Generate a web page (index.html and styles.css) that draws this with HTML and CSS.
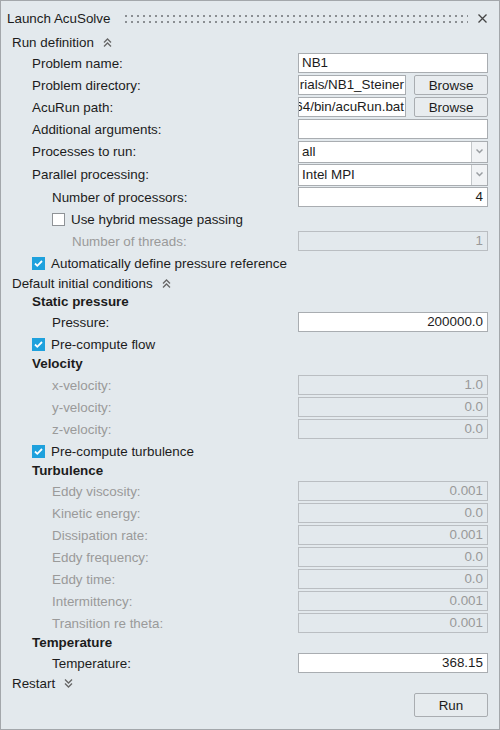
FILE: index.html
```html
<!DOCTYPE html>
<html lang="en">
<head>
    <meta charset="UTF-8">
    <meta name="viewport" content="width=device-width, initial-scale=1.0">
    <title>Launch AcuSolve</title>
    <link rel="stylesheet" href="styles.css">
</head>
<body>
<div class="panel">
    <div class="titlebar">
        <span class="title">Launch AcuSolve</span>
        <span class="grip"></span>
        <svg class="close" width="9" height="9" viewBox="0 0 9 9"><path d="M0.5 0.5 L8.5 8.5 M8.5 0.5 L0.5 8.5" stroke="#444" stroke-width="1.3" fill="none"/></svg>
    </div>

    <div class="section">
        <span>Run definition</span>
        <svg class="chev" width="9" height="9" viewBox="0 0 9 9"><path d="M1 4.5 L4.5 1 L8 4.5 M1 8.5 L4.5 5 L8 8.5" stroke="#666" stroke-width="1.3" fill="none"/></svg>
    </div>
    <div class="row l1"><span class="label">Problem name:</span><div class="field box">NB1</div></div>
    <div class="row l1"><span class="label">Problem directory:</span>
        <div class="field pair"><div class="box clip">rials/NB1_Steiner</div><span class="button">Browse</span></div></div>
    <div class="row l1"><span class="label">AcuRun path:</span>
        <div class="field pair"><div class="box clip">64/bin/acuRun.bat</div><span class="button">Browse</span></div></div>
    <div class="row l1"><span class="label">Additional arguments:</span><div class="field box"></div></div>
    <div class="row tall l1"><span class="label">Processes to run:</span>
        <div class="field select"><span class="value">all</span><span class="arrow"><svg width="7" height="5" viewBox="0 0 7 5"><path d="M0.5 0.5 L3.5 3.5 L6.5 0.5" stroke="#9a9ea2" stroke-width="1.5" fill="none"/></svg></span></div></div>
    <div class="row tall l1"><span class="label">Parallel processing:</span>
        <div class="field select"><span class="value">Intel MPI</span><span class="arrow"><svg width="7" height="5" viewBox="0 0 7 5"><path d="M0.5 0.5 L3.5 3.5 L6.5 0.5" stroke="#9a9ea2" stroke-width="1.5" fill="none"/></svg></span></div></div>
    <div class="row l2"><span class="label">Number of processors:</span><div class="field box num">4</div></div>
    <div class="row l2"><span class="check"></span><span class="label">Use hybrid message passing</span></div>
    <div class="row l3 off"><span class="label">Number of threads:</span><div class="field box num">1</div></div>
    <div class="row l1"><span class="check on"></span><span class="label">Automatically define pressure reference</span></div>

    <div class="section initial">
        <span>Default initial conditions</span>
        <svg class="chev" width="9" height="9" viewBox="0 0 9 9"><path d="M1 4.5 L4.5 1 L8 4.5 M1 8.5 L4.5 5 L8 8.5" stroke="#666" stroke-width="1.3" fill="none"/></svg>
    </div>
    <div class="heading">Static pressure</div>
    <div class="row l2"><span class="label">Pressure:</span><div class="field box num">200000.0</div></div>
    <div class="row l1"><span class="check on"></span><span class="label">Pre-compute flow</span></div>
    <div class="heading wide">Velocity</div>
    <div class="row l2 off"><span class="label">x-velocity:</span><div class="field box num">1.0</div></div>
    <div class="row l2 off"><span class="label">y-velocity:</span><div class="field box num">0.0</div></div>
    <div class="row l2 off"><span class="label">z-velocity:</span><div class="field box num">0.0</div></div>
    <div class="row l1"><span class="check on"></span><span class="label">Pre-compute turbulence</span></div>
    <div class="heading">Turbulence</div>
    <div class="row l2 off"><span class="label">Eddy viscosity:</span><div class="field box num">0.001</div></div>
    <div class="row l2 off"><span class="label">Kinetic energy:</span><div class="field box num">0.0</div></div>
    <div class="row l2 off"><span class="label">Dissipation rate:</span><div class="field box num">0.001</div></div>
    <div class="row l2 off"><span class="label">Eddy frequency:</span><div class="field box num">0.0</div></div>
    <div class="row l2 off"><span class="label">Eddy time:</span><div class="field box num">0.0</div></div>
    <div class="row l2 off"><span class="label">Intermittency:</span><div class="field box num">0.001</div></div>
    <div class="row l2 off"><span class="label">Transition re theta:</span><div class="field box num">0.001</div></div>
    <div class="heading">Temperature</div>
    <div class="row l2"><span class="label">Temperature:</span><div class="field box num">368.15</div></div>

    <div class="section restart">
        <span>Restart</span>
        <svg class="chev" width="9" height="9" viewBox="0 0 9 9"><path d="M1 0.5 L4.5 4 L8 0.5 M1 4.5 L4.5 8 L8 4.5" stroke="#666" stroke-width="1.3" fill="none"/></svg>
    </div>
    <div class="actions"><span class="button run">Run</span></div>
</div>
</body>
</html>
```

FILE: styles.css
```css
body {
    margin: 0;
}
.panel {
    width: 500px;
    height: 730px;
    box-sizing: border-box;
    border: 1px solid #a3a7ab;
    background-color: #e3e9ed;
    padding-right: 11px;
    font-family: "Liberation Sans", Arial, sans-serif;
    font-size: 13.4px;
    color: #1c1c1c;
}
.titlebar {
    height: 31px;
    box-sizing: border-box;
    padding: 4px 0 0 6px;
    display: flex;
    align-items: center;
}
.grip {
    flex: 1;
    height: 8px;
    margin: 0 10px 0 15px;
    background-image: conic-gradient(from 270deg at 2px 2px, #8a8e92 25%, transparent 0);
    background-size: 6px 6px;
}
.close {
    margin-right: 1px;
}
.section {
    height: 20px;
    padding-left: 11px;
    display: flex;
    align-items: center;
}
.section .chev {
    margin-left: 9px;
}
.section.initial {
    height: 19px;
}
.section.restart {
    height: 18px;
}
.heading {
    height: 18px;
    line-height: 18px;
    padding-left: 31px;
    font-weight: bold;
}
.heading.wide {
    height: 19px;
}
.row {
    height: 22px;
    display: flex;
    align-items: center;
}
.row.tall {
    height: 23px;
}
.l1 { padding-left: 31px; }
.l2 { padding-left: 51px; }
.l3 { padding-left: 71px; }
.off .label {
    color: #9a9a9a;
}
.field {
    margin-left: auto;
    width: 190px;
    height: 20px;
    box-sizing: border-box;
}
.box {
    border: 1px solid #a9adb1;
    background-color: #fff;
    padding: 0 3px;
    line-height: 18px;
    white-space: nowrap;
    overflow: hidden;
}
.num {
    text-align: right;
    padding-right: 4px;
}
.off .box {
    background-color: transparent;
    border-color: #babec2;
    color: #999;
}
.pair {
    display: flex;
    gap: 8px;
}
.pair .box {
    flex: 1;
    height: 20px;
    box-sizing: border-box;
    display: flex;
    justify-content: flex-end;
    padding: 0 1px 0 0;
}
.button {
    width: 74px;
    height: 20px;
    box-sizing: border-box;
    border: 1px solid #a9adb1;
    border-radius: 2px;
    background-color: #e8ecef;
    display: flex;
    align-items: center;
    justify-content: center;
}
.select {
    height: 22px;
    border: 1px solid #a9adb1;
    background-color: #fff;
    display: flex;
}
.select .value {
    flex: 1;
    padding-left: 3px;
    line-height: 20px;
}
.select .arrow {
    width: 15px;
    border-left: 1px solid #c3c7ca;
    background-color: #f1f3f5;
    display: flex;
    align-items: center;
    justify-content: center;
}
.check {
    width: 13px;
    height: 13px;
    box-sizing: border-box;
    border: 1px solid #8f9397;
    background-color: #fff;
    margin-right: 6px;
}
.check.on {
    border-color: #1ea1dd;
    background-color: #1ea1dd;
    background-image: url("data:image/svg+xml;utf8,<svg xmlns='http://www.w3.org/2000/svg' width='13' height='13' viewBox='0 0 13 13'><path d='M3 6.5 L5.3 8.8 L10 4' stroke='white' stroke-width='1.8' fill='none'/></svg>");
    background-position: -1px -1px;
}
.actions {
    display: flex;
    justify-content: flex-end;
    padding-top: 1px;
}
.run {
    height: 24px;
    background-color: #e6ebee;
}
```
